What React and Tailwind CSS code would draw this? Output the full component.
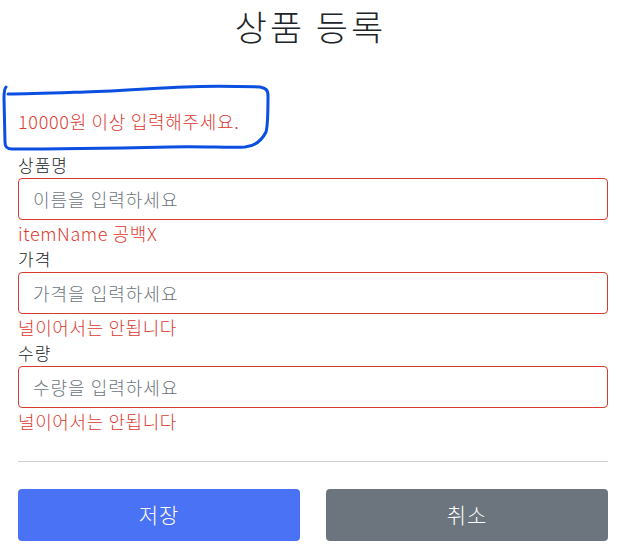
import React from "react";

function Field({ label, placeholder, error }) {
  return (
    <div className="flex flex-col">
      <label className="block h-[24px] leading-[24px] text-[17px] tracking-[1px] text-[#212529]">{label}</label>
      <input
        className="mt-[1px] h-[42px] w-full rounded-[4px] border border-[#dc3a2f] bg-white px-[14px] text-[18px] tracking-[1px] text-[#495057] outline-none placeholder:text-[#6c757d]"
        placeholder={placeholder}
      />
      <div className="mt-[1px] h-[24px] leading-[24px] text-[18px] tracking-[0.6px] text-[#dc3a2f]">{error}</div>
    </div>
  );
}

export default function App() {
  return (
    <div className="relative w-[621px] h-[548px] overflow-hidden bg-white font-['Noto_Sans_CJK_KR','Noto_Sans',sans-serif] font-light text-[#212529]">
      <h2 className="pt-[5px] text-center text-[35px] leading-[42px] tracking-[3px] font-light">상품 등록</h2>

      <div className="pl-[18px] pr-[13px]">
        <div className="mt-[62px] h-[24px] leading-[24px] text-[18px] tracking-[0.7px] text-[#dc3a2f]">10000원 이상 입력해주세요.</div>

        <div className="mt-[20px] flex flex-col gap-[2px]">
          <Field label="상품명" placeholder="이름을 입력하세요" error="itemName 공백X" />
          <Field label="가격" placeholder="가격을 입력하세요" error="널이어서는 안됩니다" />
          <Field label="수량" placeholder="수량을 입력하세요" error="널이어서는 안됩니다" />
        </div>

        <hr className="mt-[28px] border-0 border-t border-[#cfcfcf]" />

        <div className="mt-[27px] grid grid-cols-2 gap-[26px]">
          <button className="h-[52px] rounded-[4px] bg-[#4a72f4] text-[21px] tracking-[1px] text-white">저장</button>
          <button className="h-[52px] rounded-[4px] bg-[#6c757d] text-[21px] tracking-[1px] text-white">취소</button>
        </div>
      </div>

      <svg
        className="pointer-events-none absolute left-0 top-[80px]"
        width="275"
        height="80"
        viewBox="0 0 275 80"
        fill="none"
      >
        <path
          d="M6 7 C4 9 4 13 4 18 L5 62 C5 67 7 69 12 69 C60 69 120 68 170 67 C200 66 230 68 245 67 C255 66 262 60 266 52 C268 45 268 30 268 16 C268 10 266 8 260 7 C230 6 205 6 185 7 C155 8 125 11 85 12 C55 13 28 14 8 14"
          stroke="#0a4fe0"
          strokeWidth="3"
          strokeLinecap="round"
          strokeLinejoin="round"
        />
      </svg>
    </div>
  );
}
